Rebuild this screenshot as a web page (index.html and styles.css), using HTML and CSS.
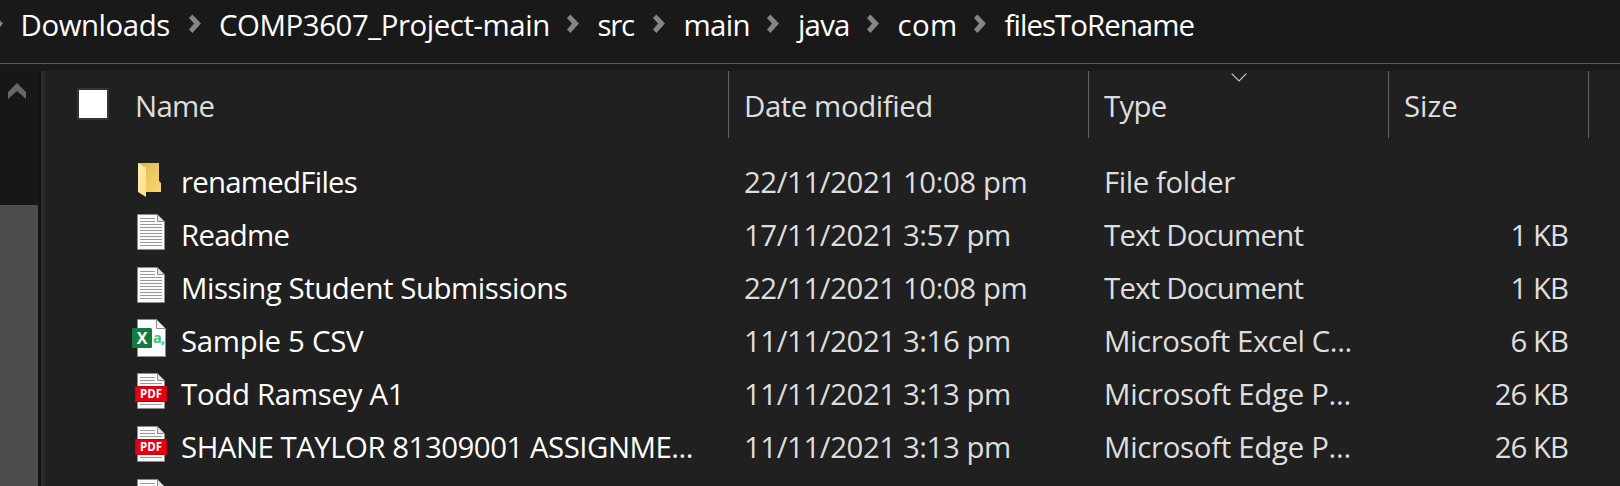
FILE: index.html
```html
<!DOCTYPE html>
<html lang="en">
<head>
<meta charset="utf-8">
<title>filesToRename</title>
<link rel="stylesheet" href="styles.css">
</head>
<body>
<svg class="defs" width="0" height="0">
  <defs>
    <linearGradient id="flap" x1="0" y1="0" x2="1" y2="1">
      <stop offset="0" stop-color="#ffeeb0"/><stop offset="1" stop-color="#fbdd86"/>
    </linearGradient>
    <linearGradient id="back" x1="0" y1="0" x2="1" y2="1">
      <stop offset="0" stop-color="#e3b84f"/><stop offset="1" stop-color="#f8d775"/>
    </linearGradient>
    <symbol id="chev" viewBox="0 0 12 20"><path d="M3.4.6 12 9.6 3.4 19 0 15.6 5 9.6 0 4z" fill="#858585"/></symbol>
    <symbol id="folder" viewBox="0 0 36 36">
      <path d="M6 2h21v18l2 2v9H6z" fill="url(#back)"/>
      <path d="M6 2 14 7v29L6 31z" fill="url(#flap)"/>
    </symbol>
    <symbol id="sheet" viewBox="0 0 36 36">
      <path d="M5.5.5h20l7 7v28h-27z" fill="#fafafa" stroke="#8c8c8c"/>
      <path d="M25.5.5v7h7z" fill="#e4e4e4" stroke="#8c8c8c"/>
    </symbol>
    <symbol id="text" viewBox="0 0 36 36">
      <use href="#sheet"/>
      <path d="M8 4.5h15M8 7.5h15M8 10.5h22M8 13.5h22M8 16.5h22M8 19.5h22M8 22.5h22M8 25.5h22M8 28.5h22M8 31.5h22" stroke="#9b9b9b"/>
    </symbol>
    <symbol id="csv" viewBox="0 0 36 38">
      <path d="M5.5.5h19l9 9v28h-28z" fill="#fdfdfd" stroke="#8c8c8c"/>
      <path d="M24.5.5v9h9z" fill="#f4f4f4" stroke="#8c8c8c"/>
      <rect y="9" width="20" height="20" rx="1.5" fill="#107c41"/>
      <text class="glyph-x" x="10" y="25">X</text>
      <text class="glyph-a" x="21" y="23.5">a,</text>
    </symbol>
    <symbol id="pdf" viewBox="0 0 36 36">
      <use href="#sheet"/>
      <path d="M8 4.5h15M8 7.5h15M8 10.5h22M8 31.5h22" stroke="#9b9b9b"/>
      <rect x="3" y="13" width="32" height="16" fill="#c9000e"/>
      <rect x="4" y="14" width="30" height="14" fill="#e60012"/>
      <text class="glyph-pdf" x="19" y="25">PDF</text>
    </symbol>
  </defs>
</svg>

<nav class="crumbs">
  <svg class="chev"><use href="#chev"/></svg>
  <span class="crumb downloads">Downloads</span><svg class="chev"><use href="#chev"/></svg>
  <span class="crumb project">COMP3607_Project-main</span><svg class="chev"><use href="#chev"/></svg>
  <span class="crumb src">src</span><svg class="chev"><use href="#chev"/></svg>
  <span class="crumb main">main</span><svg class="chev"><use href="#chev"/></svg>
  <span class="crumb java">java</span><svg class="chev"><use href="#chev"/></svg>
  <span class="crumb com">com</span><svg class="chev"><use href="#chev"/></svg>
  <span class="crumb files">filesToRename</span>
</nav>

<div class="body">
  <aside class="scroll">
    <svg class="up" viewBox="0 0 18 16"><path d="M0 9 9 0l9 9v7L9 8l-9 8z" fill="#686868"/></svg>
    <div class="thumb"></div>
  </aside>
  <div class="splitter"></div>
  <main class="pane">
    <header class="head">
      <div class="th name"><span class="check"></span><span class="tight">Name</span></div>
      <div class="th">Date modified</div>
      <div class="th"><span class="tight">Type</span>
        <svg class="sort" viewBox="0 0 16 9"><path d="M.7.7 8 8 15.3.7" fill="none" stroke="#c8c8c8" stroke-width="1.2"/></svg>
      </div>
      <div class="th"><span class="wide">Size</span></div>
    </header>
    <div class="row"><div class="file"><svg class="icon"><use href="#folder"/></svg><span class="tight">renamedFiles</span></div><div>22/11/2021 10:08 pm</div><div>File folder</div><div class="size"></div></div>
    <div class="row"><div class="file"><svg class="icon"><use href="#text"/></svg><span class="tight">Readme</span></div><div>17/11/2021 3:57 pm</div><div class="tighter">Text Document</div><div class="size">1 KB</div></div>
    <div class="row"><div class="file"><svg class="icon"><use href="#text"/></svg><span>Missing Student Submissions</span></div><div>22/11/2021 10:08 pm</div><div class="tighter">Text Document</div><div class="size">1 KB</div></div>
    <div class="row"><div class="file"><svg class="icon tall"><use href="#csv"/></svg><span class="loose">Sample 5 CSV</span></div><div>11/11/2021 3:16 pm</div><div>Microsoft Excel C...</div><div class="size">6 KB</div></div>
    <div class="row"><div class="file"><svg class="icon"><use href="#pdf"/></svg><span class="loose">Todd Ramsey A1</span></div><div>11/11/2021 3:13 pm</div><div class="loose">Microsoft Edge P...</div><div class="size">26 KB</div></div>
    <div class="row"><div class="file"><svg class="icon"><use href="#pdf"/></svg><span class="caps">SHANE TAYLOR 81309001 ASSIGNME...</span></div><div>11/11/2021 3:13 pm</div><div class="loose">Microsoft Edge P...</div><div class="size">26 KB</div></div>
    <div class="row"><div class="file"><svg class="icon"><use href="#pdf"/></svg></div></div>
  </main>
</div>
</body>
</html>
```
FILE: styles.css
```css
* { box-sizing: border-box; }
body {
  margin: 0;
  height: 486px;
  overflow: hidden;
  display: flex;
  flex-direction: column;
  background: #191919;
  color: #dedede;
  font: 29.4px "Open Sans", "Noto Sans", sans-serif;
  letter-spacing: -0.43px;
  white-space: nowrap;
}
.defs { position: absolute; }

/* Address bar */
.crumbs {
  display: flex;
  height: 64px;
  flex: none;
  margin-bottom: 7px;
  border-bottom: 1px solid #5c5c5c;
  color: #fff;
  line-height: 51px;
}
.chev { width: 12px; height: 20px; flex: none; margin: 14px 0 0; }
.crumbs > .chev:first-child { margin-left: -9px; }
.crumb { flex: none; margin-left: 17.5px; }
.downloads { width: 168.5px; }
.project { width: 348px; margin-left: 18px; }
.src { width: 55.5px; margin-left: 18.5px; letter-spacing: -1.2px; }
.main { width: 83.5px; margin-left: 18.5px; letter-spacing: -0.67px; }
.java { width: 69px; margin-left: 19px; letter-spacing: -0.8px; }
.com { width: 76.5px; margin-left: 18.5px; letter-spacing: 0.4px; }
.files { margin-left: 18.5px; letter-spacing: -0.95px; }

/* Navigation scrollbar */
.body { display: flex; flex: 1; min-height: 0; }
.scroll { width: 38px; background: #171717; display: flex; flex-direction: column; }
.up { width: 18px; height: 16px; margin: 12px 0 106px 8px; flex: none; }
.thumb { flex: 1; background: #4d4d4d; }
.splitter { width: 7px; background: #2b2b2b; border-left: 3px solid #131313; }

/* File list */
.pane { flex: 1; background: #202020; overflow: hidden; }
.head, .row { display: grid; grid-template-columns: 684px 360px 300px 200px; }
.head { height: 67px; margin-bottom: 15px; line-height: 71px; }
.th { position: relative; height: 67px; border-right: 1px solid #636363; padding-left: 15px; }
.th.name { display: flex; padding-left: 32px; }
.check { width: 32px; height: 32px; margin: 17px 26px 0 0; border: 2px solid #333; background: #fff; }
.sort { position: absolute; left: 142px; top: 2px; width: 16px; height: 9px; }
.row { height: 53px; line-height: 59px; }
.row > div { padding-left: 15px; }
.row > .file { display: flex; padding-left: 87px; color: #fff; }
.icon { width: 36px; height: 36px; margin: 8px 13px 0 0; flex: none; }
.icon.tall { height: 38px; margin-top: 7px; }
.row > .size { text-align: right; padding-right: 21px; letter-spacing: -1px; }
.row .tight, .th .tight { letter-spacing: -0.75px; }
.row .tighter { letter-spacing: -0.8px; }
.row .loose { letter-spacing: -0.3px; }
.row .caps { letter-spacing: -0.49px; }
.th .wide { letter-spacing: 0; }

.glyph-x, .glyph-a, .glyph-pdf { font-weight: 700; letter-spacing: 0; }
.glyph-x { font-size: 16px; fill: #fff; text-anchor: middle; }
.glyph-a { font-size: 14.5px; letter-spacing: -0.8px; fill: #33c481; }
.glyph-pdf { font-size: 11.5px; fill: #fff; text-anchor: middle; }
```
